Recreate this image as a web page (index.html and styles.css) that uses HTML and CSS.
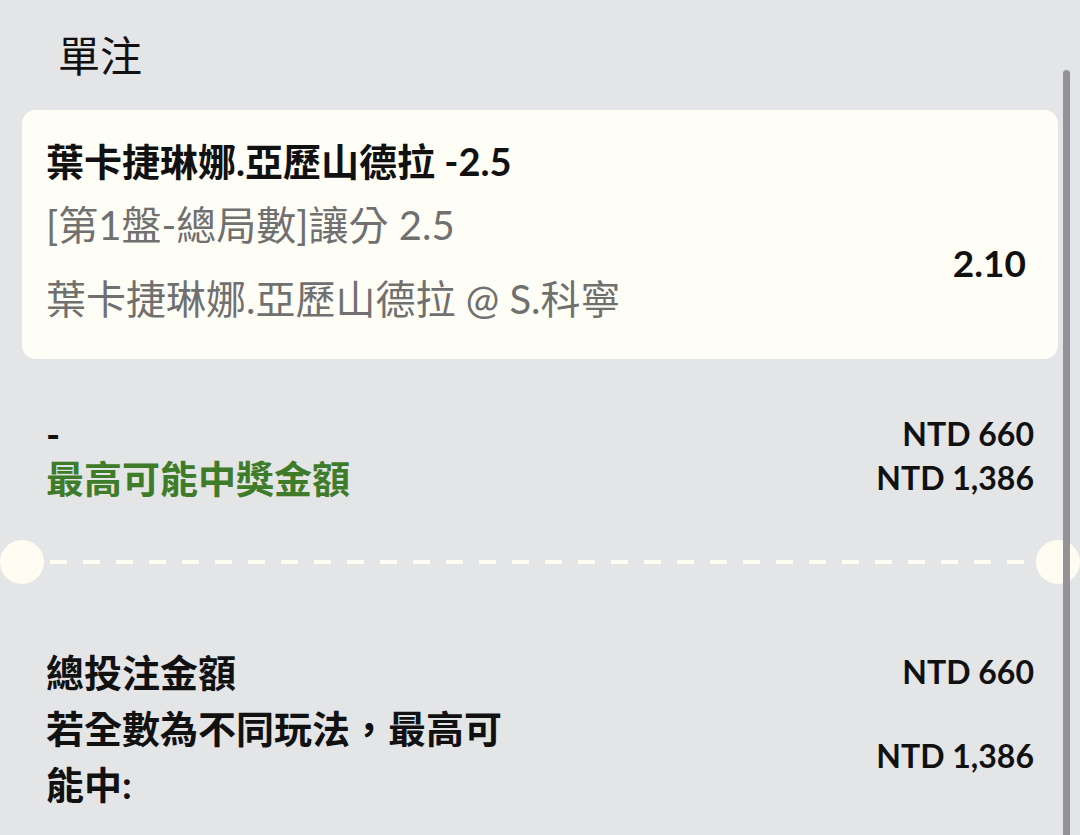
FILE: index.html
```html
<!DOCTYPE html>
<html lang="zh-Hant">
<head>
    <meta charset="UTF-8">
    <meta name="viewport" content="width=device-width, initial-scale=1.0">
    <title>單注</title>
    <link rel="stylesheet" href="styles.css">
</head>
<body>
    <div class="sheet">
        <h2 class="sheet-title">單注</h2>

        <!-- selection card -->
        <div class="bet-card">
            <div class="bet-name">葉卡捷琳娜.亞歷山德拉 -2.5</div>
            <div class="bet-body">
                <div class="bet-info">
                    <div class="bet-market">[第1盤-總局數]讓分 2.5</div>
                    <div class="bet-match">葉卡捷琳娜.亞歷山德拉 @ S.科寧</div>
                </div>
                <div class="bet-odds">2.10</div>
            </div>
        </div>

        <div class="stake-block">
            <div class="row">
                <span class="label">-</span>
                <span class="amount">NTD 660</span>
            </div>
            <div class="row">
                <span class="label green">最高可能中獎金額</span>
                <span class="amount">NTD 1,386</span>
            </div>
        </div>

        <div class="divider"><div class="dash"></div></div>

        <div class="summary">
            <div class="row">
                <span class="label">總投注金額</span>
                <span class="amount">NTD 660</span>
            </div>
            <div class="row">
                <span class="label wrap">若全數為不同玩法，最高可能中:</span>
                <span class="amount">NTD 1,386</span>
            </div>
        </div>
    </div>

    <div class="scrollbar"></div>
</body>
</html>
```

FILE: styles.css
```css
body {
    font-family: Lato, "Noto Sans CJK TC", sans-serif;
    background-color: #e4e5e7;
    color: #111111;
    margin: 0;
    padding: 0;
    overflow: hidden;
}

.sheet {
    width: 1080px;
}

.sheet-title {
    margin: 0;
    padding-left: 58px;
    height: 110px;
    line-height: 112px;
    font-size: 42px;
    font-weight: 400;
}

/* selection card */
.bet-card {
    margin: 0 22px;
    padding: 19px 32px 28px 24px;
    background-color: #fffef6;
    border-radius: 14px;
}

.bet-name {
    font-size: 38px;
    font-weight: 700;
    line-height: 64px;
}

.bet-body {
    display: flex;
    justify-content: space-between;
    align-items: center;
}

.bet-market,
.bet-match {
    font-size: 40px;
    line-height: 64px;
    color: #707070;
}

.bet-match {
    margin-top: 10px;
}

.bet-odds {
    font-size: 37px;
    font-weight: 700;
}

/* amounts */
.stake-block {
    margin-top: 53px;
    padding: 0 46px;
}

.stake-block .row {
    line-height: 44px;
}

.row {
    display: flex;
    justify-content: space-between;
    align-items: center;
}

.label {
    font-size: 38px;
    font-weight: 700;
}

.green {
    color: #3e7c29;
}

.amount {
    font-size: 32px;
    font-weight: 700;
}

/* ticket divider */
.divider {
    display: flex;
    align-items: center;
    margin-top: 40px;
    height: 44px;
}

.divider::before,
.divider::after {
    content: "";
    width: 44px;
    height: 44px;
    border-radius: 50%;
    background-color: #fffdf2;
    flex-shrink: 0;
}

.dash {
    flex: 1;
    height: 4px;
    margin: 0 6px;
    background: repeating-linear-gradient(to right, #fffdf2 0 17px, transparent 17px 33px);
}

.summary {
    margin-top: 60px;
    padding: 0 46px;
}

.summary .row {
    line-height: 56px;
}

.wrap {
    width: 470px;
}

.scrollbar {
    position: absolute;
    top: 70px;
    left: 1063px;
    width: 7px;
    height: 800px;
    border-radius: 4px;
    background-color: #939397;
}
```
